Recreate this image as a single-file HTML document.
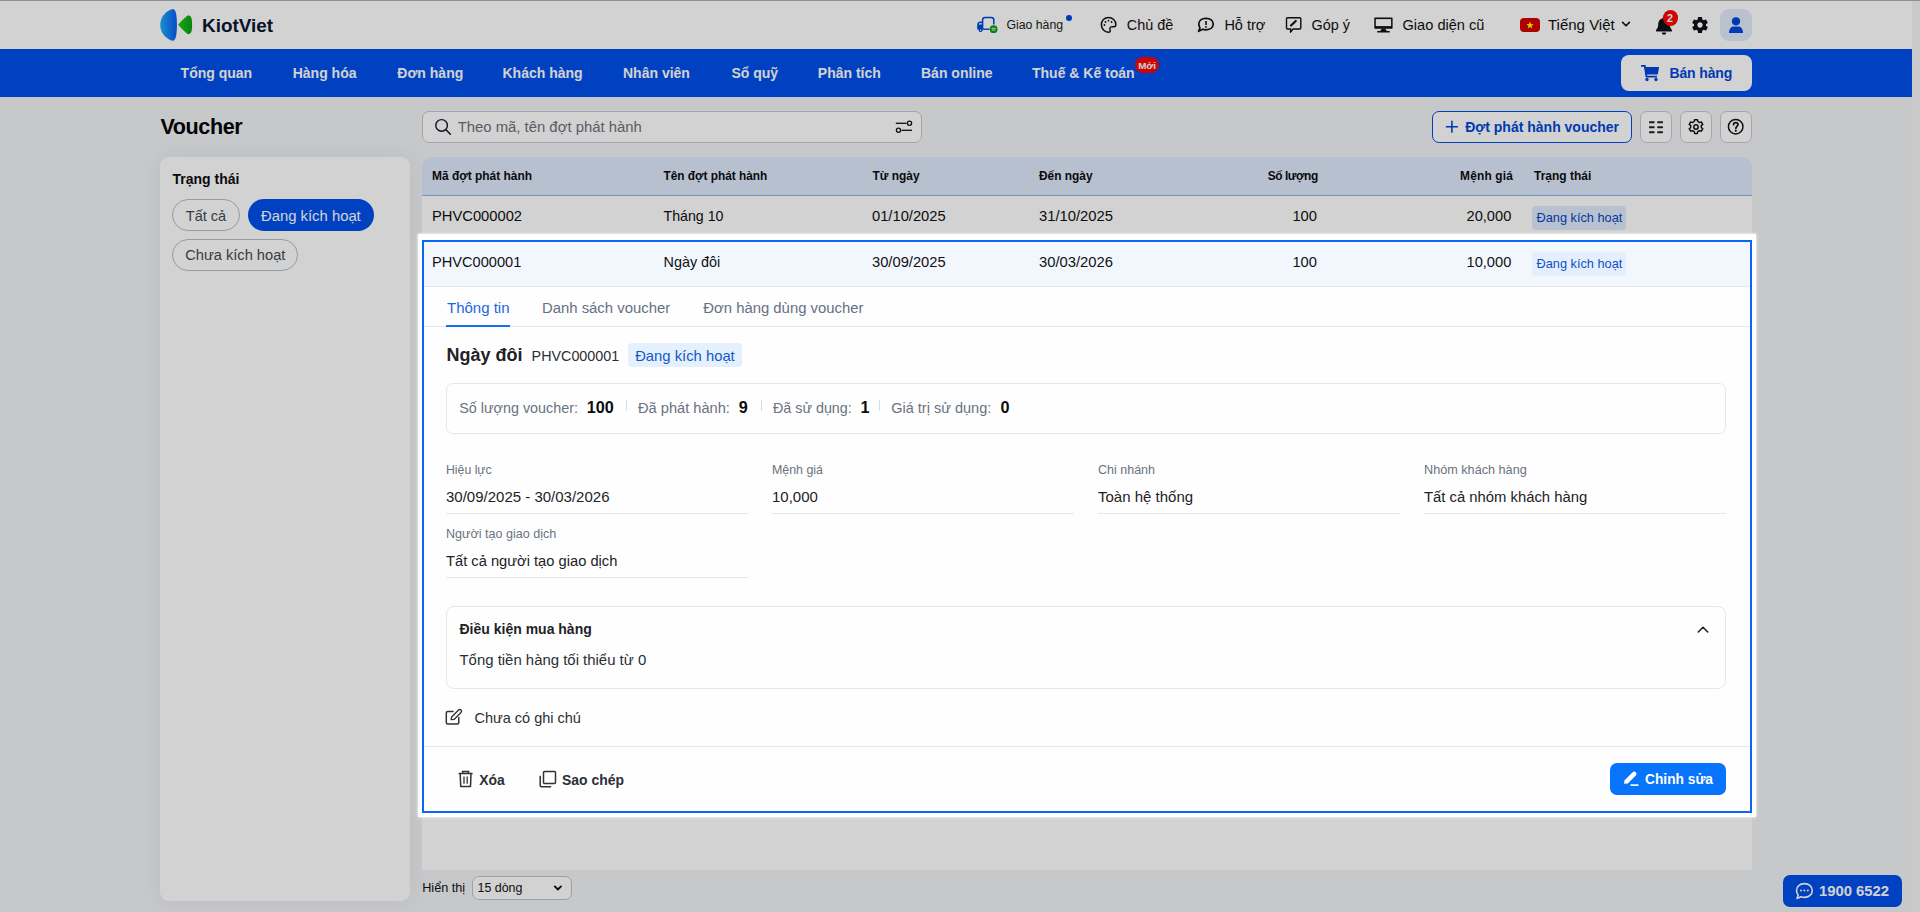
<!DOCTYPE html>
<html lang="vi"><head><meta charset="utf-8"><title>Voucher - KiotViet</title>
<style>
html,body{margin:0;padding:0;}
body{width:1920px;height:912px;overflow:hidden;position:relative;background:#f1f3f6;font-family:"Liberation Sans",sans-serif;}
.t{position:absolute;white-space:nowrap;}
</style></head><body>
<div style="position:absolute;left:0px;top:0px;width:1912px;height:49px;box-sizing:border-box;background:#fff;"></div><svg style="position:absolute;left:158px;top:8px;" width="38" height="34" viewBox="158 8 38 34">
<defs><linearGradient id="lg1" x1="0" y1="0" x2="1" y2="0"><stop offset="0" stop-color="#22b0f6"/><stop offset="1" stop-color="#0a5cf6"/></linearGradient>
<linearGradient id="lg2" x1="0" y1="0" x2="1" y2="0"><stop offset="0" stop-color="#2cc80e"/><stop offset="1" stop-color="#03a414"/></linearGradient></defs>
<path d="M172.7,9.1 C175.6,9.5 176.9,14 176.9,24.9 C176.9,35.8 175.6,40.3 172.7,40.8 C167.2,39.4 160.2,33.6 160.2,24.9 C160.2,16.2 167.2,10.5 172.7,9.1 Z" fill="url(#lg1)"/>
<path d="M178,24.75 C181,21.5 184.5,18 187.5,15.6 C189.8,14.8 191.4,16.5 191.8,19.5 C192.2,22.5 192.2,27 191.8,30 C191.4,33 189.8,34.7 187.5,34 C184.5,31.5 181,28 178,24.75 Z" fill="url(#lg2)"/>
</svg><div class="t " style="left:202.00px;top:17px;font-size:18.9px;line-height:18.9px;color:#0c1633;font-weight:700;letter-spacing:0px;">KiotViet</div><svg style="position:absolute;left:975px;top:15px;" width="24" height="20" viewBox="975 15 24 20">
<path d="M982.6,29.3 V19.8 C982.6,18.2 983.6,17.4 985.2,17.4 H991.2 C992.8,17.4 993.8,18.2 993.8,19.8 V24.6" fill="none" stroke="#0047d9" stroke-width="1.5"/>
<path d="M982.6,29.2 H989.5" fill="none" stroke="#0047d9" stroke-width="1.4"/>
<path d="M977.2,29.6 V24.5 C977.2,22.6 978.6,21.6 980.3,21.6 H982.8 V29.6 Z" fill="#0047d9"/>
<path d="M978.6,24.6 C979,23.4 980,23 981.6,23 V24.6 Z" fill="#fff"/>
<circle cx="980.6" cy="30.2" r="1.9" fill="#0047d9"/><circle cx="980.6" cy="30.2" r="0.7" fill="#fff"/>
<circle cx="993.6" cy="29.2" r="3.9" fill="#079a1a"/>
<rect x="991.4" y="27.8" width="4.4" height="0.9" fill="#fff"/><rect x="991.8" y="29.6" width="3.6" height="0.9" fill="#fff"/>
</svg><div class="t " style="left:1006.40px;top:19px;font-size:12.3px;line-height:12.3px;color:#1a1d22;">Giao hàng</div><div style="position:absolute;left:1066px;top:15px;width:6px;height:6px;box-sizing:border-box;background:#0047d9;border-radius:50%;"></div><svg style="position:absolute;left:1099px;top:15px;" width="20" height="20" viewBox="1099 15 20 20">
<path d="M1108.6,17.5 C1104.3,17.5 1101.4,20.7 1101.4,24.7 C1101.4,29 1104.6,32.2 1108.3,32.2 C1110.3,32.2 1110.4,31.2 1110.1,30.2 C1109.8,29.1 1109.6,27.7 1110.6,27 C1111.5,26.4 1112.8,26.7 1114.2,26.7 C1115.5,26.7 1115.8,25.8 1115.8,24.6 C1115.8,20.6 1112.6,17.5 1108.6,17.5 Z" fill="none" stroke="#111" stroke-width="1.5" stroke-linejoin="round"/>
<circle cx="1105.5" cy="22" r="0.9" fill="#111"/><circle cx="1108.5" cy="20.6" r="0.9" fill="#111"/><circle cx="1111.6" cy="22" r="0.9" fill="#111"/><circle cx="1104.4" cy="25" r="0.9" fill="#111"/>
</svg><div class="t " style="left:1126.80px;top:18px;font-size:14.45px;line-height:14.45px;color:#111;">Chủ đề</div><svg style="position:absolute;left:1196px;top:15px;" width="20" height="20" viewBox="1196 15 20 20">
<path d="M1206,18.4 C1210.3,18.4 1213.2,20.8 1213.2,24.1 C1213.2,27.4 1210.3,29.8 1206,29.8 C1204.8,29.8 1203.7,29.6 1202.8,29.3 L1198.6,31.3 L1200,27.9 C1199.2,26.8 1198.8,25.5 1198.8,24.1 C1198.8,20.8 1201.7,18.4 1206,18.4 Z" fill="none" stroke="#111" stroke-width="1.7" stroke-linejoin="round"/>
<rect x="1205.2" y="21" width="1.6" height="4" fill="#111"/><rect x="1205.2" y="26.1" width="1.6" height="1.6" fill="#111"/>
</svg><div class="t " style="left:1224.40px;top:18px;font-size:14.5px;line-height:14.5px;color:#111;">Hỗ trợ</div><svg style="position:absolute;left:1284px;top:15px;" width="20" height="20" viewBox="1284 15 20 20">
<path d="M1287.5,17.7 H1299.8 C1300.4,17.7 1300.8,18.1 1300.8,18.7 V28 C1300.8,28.6 1300.4,29 1299.8,29 H1293 L1290.6,32.2 V29 H1287.5 C1286.9,29 1286.5,28.6 1286.5,28 V18.7 C1286.5,18.1 1286.9,17.7 1287.5,17.7 Z" fill="none" stroke="#111" stroke-width="1.4" stroke-linejoin="round"/>
<path d="M1291,25.6 L1295.8,20.9" stroke="#111" stroke-width="2.1" stroke-linecap="round"/>
</svg><div class="t " style="left:1311.60px;top:18px;font-size:14.4px;line-height:14.4px;color:#111;">Góp ý</div><svg style="position:absolute;left:1372px;top:15px;" width="22" height="20" viewBox="1372 15 22 20">
<path d="M1375.3,17.6 H1391.6 C1392.3,17.6 1392.6,18 1392.6,18.6 V27.8 C1392.6,28.4 1392.3,28.8 1391.6,28.8 H1375.3 C1374.7,28.8 1374.3,28.4 1374.3,27.8 V18.6 C1374.3,18 1374.7,17.6 1375.3,17.6 Z" fill="#111"/>
<rect x="1375.8" y="19.1" width="15.3" height="7" fill="#fff"/>
<path d="M1381.5,28.8 H1385.5 L1386.6,31 H1389.7 V32.6 H1377.2 V31 H1380.4 Z" fill="#111"/>
</svg><div class="t " style="left:1402.50px;top:18px;font-size:14.6px;line-height:14.6px;color:#111;">Giao diện cũ</div><div style="position:absolute;left:1520px;top:18px;width:20px;height:14px;box-sizing:border-box;background:#d20000;border-radius:4px;"></div><svg style="position:absolute;left:1524px;top:18.6px;" width="12" height="12" viewBox="0 0 24 24"><polygon points="12,5 13.9,10.2 19.4,10.3 15,13.6 16.6,19 12,15.8 7.4,19 9,13.6 4.6,10.3 10.1,10.2" fill="#ffff00"/></svg><div class="t " style="left:1548.00px;top:17px;font-size:15.0px;line-height:15.0px;color:#111;">Tiếng Việt</div><svg style="position:absolute;left:1620px;top:19px;" width="12" height="10" viewBox="1620 19 12 10"><path d="M1622.6,22.4 L1626,25.8 L1629.4,22.4" fill="none" stroke="#111" stroke-width="1.6" stroke-linecap="round" stroke-linejoin="round"/></svg><svg style="position:absolute;left:1652px;top:14px;" width="24" height="24" viewBox="1652 14 24 24">
<path d="M1664,16.6 C1663.3,16.6 1662.8,17.1 1662.8,17.7 V18.3 C1660.1,18.8 1658.2,21.2 1658.2,23.9 V24.8 C1658.2,26.5 1657.6,28.1 1656.5,29.4 L1656.2,29.7 C1655.9,30.1 1655.8,30.6 1656,31 C1656.2,31.4 1656.6,31.6 1657.1,31.6 H1670.9 C1671.4,31.6 1671.8,31.4 1672,31 C1672.2,30.6 1672.1,30.1 1671.8,29.7 L1671.5,29.4 C1670.4,28.1 1669.8,26.5 1669.8,24.8 V23.9 C1669.8,21.2 1667.9,18.8 1665.2,18.3 V17.7 C1665.2,17.1 1664.7,16.6 1664,16.6 Z" fill="#101217"/>
<path d="M1661.8,32.5 H1666.2 C1666.2,33.8 1665.2,34.8 1664,34.8 C1662.8,34.8 1661.8,33.8 1661.8,32.5 Z" fill="#101217"/>
</svg><div style="position:absolute;left:1662.6px;top:10.2px;width:15.6px;height:15.6px;box-sizing:border-box;background:#fa0606;border-radius:50%;"></div><div class="t " style="left:1666.90px;top:13px;font-size:10.8px;line-height:10.8px;color:#fff;font-weight:700;">2</div><svg style="position:absolute;left:1690px;top:15px;" width="20" height="20" viewBox="0 0 24 24"><path fill="#101217" d="M19.14,12.94c0.04-0.3,0.06-0.61,0.06-0.94c0-0.32-0.02-0.64-0.07-0.94l2.03-1.58c0.18-0.14,0.23-0.41,0.12-0.61 l-1.92-3.32c-0.12-0.22-0.37-0.29-0.59-0.22l-2.39,0.96c-0.5-0.38-1.03-0.7-1.62-0.94L14.4,2.81c-0.04-0.24-0.24-0.41-0.48-0.41 h-3.84c-0.24,0-0.43,0.17-0.47,0.41L9.25,5.35C8.66,5.59,8.12,5.92,7.63,6.29L5.24,5.33c-0.22-0.08-0.47,0-0.59,0.22L2.74,8.87 C2.62,9.08,2.66,9.34,2.86,9.48l2.03,1.58C4.84,11.36,4.8,11.69,4.8,12s0.02,0.64,0.07,0.94l-2.03,1.58 c-0.18,0.14-0.23,0.41-0.12,0.61l1.92,3.32c0.12,0.22,0.37,0.29,0.59,0.22l2.39-0.96c0.5,0.38,1.03,0.7,1.62,0.94l0.36,2.54 c0.05,0.24,0.24,0.41,0.48,0.41h3.84c0.24,0,0.44-0.17,0.47-0.41l0.36-2.54c0.59-0.24,1.13-0.56,1.62-0.94l2.39,0.96 c0.22,0.08,0.47,0,0.59-0.22l1.92-3.32c0.12-0.22,0.07-0.47-0.12-0.61L19.14,12.94z M12,15.2c-1.77,0-3.2-1.43-3.2-3.2 s1.43-3.2,3.2-3.2s3.2,1.43,3.2,3.2S13.77,15.2,12,15.2z"/></svg><div style="position:absolute;left:1720px;top:9px;width:32px;height:32px;box-sizing:border-box;background:#e0ebf9;border-radius:9px;"></div><svg style="position:absolute;left:1727px;top:15px;" width="18" height="20" viewBox="1727 15 18 20">
<circle cx="1736" cy="21.3" r="4.1" fill="#0047d9"/>
<path d="M1729,33 C1729,28.3 1731.6,26.4 1733.8,26.4 H1738.2 C1740.4,26.4 1743,28.3 1743,33 Z" fill="#0047d9"/>
</svg><div style="position:absolute;left:0px;top:49px;width:1912px;height:48px;box-sizing:border-box;background:#0050eb;"></div><div class="t " style="left:180.60px;top:66px;font-size:14.0px;line-height:14.0px;color:#fff;font-weight:700;">Tổng quan</div><div class="t " style="left:292.70px;top:66px;font-size:14.0px;line-height:14.0px;color:#fff;font-weight:700;">Hàng hóa</div><div class="t " style="left:397.30px;top:66px;font-size:14.0px;line-height:14.0px;color:#fff;font-weight:700;">Đơn hàng</div><div class="t " style="left:502.50px;top:66px;font-size:14.0px;line-height:14.0px;color:#fff;font-weight:700;">Khách hàng</div><div class="t " style="left:623.00px;top:66px;font-size:14.0px;line-height:14.0px;color:#fff;font-weight:700;">Nhân viên</div><div class="t " style="left:731.40px;top:66px;font-size:14.0px;line-height:14.0px;color:#fff;font-weight:700;">Sổ quỹ</div><div class="t " style="left:817.80px;top:66px;font-size:14.0px;line-height:14.0px;color:#fff;font-weight:700;">Phân tích</div><div class="t " style="left:921.00px;top:66px;font-size:14.0px;line-height:14.0px;color:#fff;font-weight:700;">Bán online</div><div class="t " style="left:1032.00px;top:66px;font-size:14.0px;line-height:14.0px;color:#fff;font-weight:700;">Thuế &amp; Kế toán</div><div style="position:absolute;left:1135px;top:57px;width:24px;height:16px;box-sizing:border-box;background:#fa0606;border-radius:8px;"></div><div class="t " style="left:1138.20px;top:61px;font-size:9.8px;line-height:9.8px;color:#fff;font-weight:700;">Mới</div><div style="position:absolute;left:1621px;top:55px;width:131px;height:36px;box-sizing:border-box;background:#fff;border-radius:8px;"></div><svg style="position:absolute;left:1639px;top:62px;" width="22" height="22" viewBox="1639 62 22 22">
<path d="M1641,64.9 H1645.6 L1646,66.9 H1659.1 L1657.8,74.6 H1647.1 L1647.3,75.8 H1657 V77.5 H1645.7 L1643.9,66.7 H1641 Z" fill="#0047d9"/>
<circle cx="1647" cy="79.5" r="1.7" fill="#0047d9"/><circle cx="1656" cy="79.5" r="1.7" fill="#0047d9"/>
</svg><div class="t " style="left:1669.50px;top:66px;font-size:14.0px;line-height:14.0px;color:#0047d9;font-weight:700;letter-spacing:-0.15px;">Bán hàng</div><div class="t " style="left:160.50px;top:116px;font-size:21.6px;line-height:21.6px;color:#050608;font-weight:700;letter-spacing:-0.45px;">Voucher</div><div style="position:absolute;left:422px;top:111px;width:500px;height:32px;box-sizing:border-box;background:#fff;border:1px solid #c5cad1;border-radius:7px;"></div><svg style="position:absolute;left:433px;top:117px;" width="20" height="20" viewBox="433 117 20 20"><circle cx="441.6" cy="125.4" r="5.8" fill="none" stroke="#101a2a" stroke-width="1.4"/><path d="M445.9,129.7 L450.4,134.2" stroke="#101a2a" stroke-width="1.5" stroke-linecap="round"/></svg><div class="t " style="left:457.70px;top:120px;font-size:14.86px;line-height:14.86px;color:#6b7280;">Theo mã, tên đợt phát hành</div><svg style="position:absolute;left:893px;top:118px;" width="24" height="18" viewBox="893 118 24 18">
<path d="M895.8,123.3 H906.5" stroke="#111" stroke-width="1.3"/><circle cx="909.5" cy="123.3" r="2.1" fill="none" stroke="#111" stroke-width="1.3"/>
<path d="M901.5,130.3 H912" stroke="#111" stroke-width="1.3"/><circle cx="898.5" cy="130.3" r="2.1" fill="none" stroke="#111" stroke-width="1.3"/>
</svg><div style="position:absolute;left:1432px;top:111px;width:200px;height:32px;box-sizing:border-box;background:#fff;border:1.5px solid #0050eb;border-radius:7px;"></div><svg style="position:absolute;left:1443px;top:117px;" width="18" height="20" viewBox="1443 117 18 20"><path d="M1451.9,120.8 V132.8 M1445.9,126.8 H1457.9" stroke="#0047d9" stroke-width="1.6"/></svg><div class="t " style="left:1465.20px;top:120px;font-size:14.0px;line-height:14.0px;color:#0047d9;font-weight:700;">Đợt phát hành voucher</div><div style="position:absolute;left:1640px;top:111px;width:32px;height:32px;box-sizing:border-box;background:#fff;border:1px solid #c5cad1;border-radius:7px;"></div><div style="position:absolute;left:1680px;top:111px;width:32px;height:32px;box-sizing:border-box;background:#fff;border:1px solid #c5cad1;border-radius:7px;"></div><div style="position:absolute;left:1720px;top:111px;width:32px;height:32px;box-sizing:border-box;background:#fff;border:1px solid #c5cad1;border-radius:7px;"></div><svg style="position:absolute;left:1646px;top:117px;" width="20" height="20" viewBox="1646 117 20 20">
<g fill="#222"><rect x="1649" y="121.2" width="5.6" height="2" rx="0.6"/><rect x="1657.2" y="121.2" width="5.8" height="2" rx="0.6"/>
<rect x="1649" y="126.2" width="5.6" height="2" rx="0.6"/><rect x="1657.2" y="126.2" width="5.8" height="2" rx="0.6"/>
<rect x="1649" y="131.2" width="5.6" height="2" rx="0.6"/><rect x="1657.2" y="131.2" width="5.8" height="2" rx="0.6"/></g>
</svg><svg style="position:absolute;left:1686px;top:116.8px;" width="20" height="20" viewBox="0 0 24 24"><path fill="none" stroke="#111" stroke-width="1.75" stroke-linejoin="round" d="M10.3,3.2 h3.4 l0.5,2.4 c0.7,0.25 1.3,0.6 1.9,1.05 l2.3,-0.8 l1.7,2.95 l-1.8,1.6 c0.12,0.7 0.12,1.45 0,2.15 l1.8,1.6 l-1.7,2.95 l-2.3,-0.8 c-0.6,0.45 -1.2,0.8 -1.9,1.05 l-0.5,2.4 h-3.4 l-0.5,-2.4 c-0.7,-0.25 -1.3,-0.6 -1.9,-1.05 l-2.3,0.8 l-1.7,-2.95 l1.8,-1.6 c-0.12,-0.7 -0.12,-1.45 0,-2.15 l-1.8,-1.6 l1.7,-2.95 l2.3,0.8 c0.6,-0.45 1.2,-0.8 1.9,-1.05 z"/><circle cx="12" cy="12" r="2.6" fill="none" stroke="#111" stroke-width="1.75"/></svg><svg style="position:absolute;left:1726.3px;top:117px;" width="19.4" height="19.4" viewBox="0 0 24 24"><circle cx="12" cy="12" r="9" fill="none" stroke="#111" stroke-width="1.8"/><path d="M9.3,9.6 C9.3,8 10.5,6.9 12,6.9 C13.6,6.9 14.8,8 14.8,9.4 C14.8,11.3 12.2,11.7 12.2,13.8" fill="none" stroke="#111" stroke-width="2.1" stroke-linecap="round"/><circle cx="12.1" cy="16.9" r="1.3" fill="#111"/></svg><div style="position:absolute;left:160px;top:157px;width:250px;height:744px;box-sizing:border-box;background:#fff;border-radius:9px;box-shadow:0 0 24px rgba(0,0,0,0.06);"></div><div class="t " style="left:172.50px;top:172px;font-size:14.0px;line-height:14.0px;color:#0b0d10;font-weight:700;">Trạng thái</div><div style="position:absolute;left:172px;top:199px;width:68px;height:32px;box-sizing:border-box;border:1px solid #b9bdc3;border-radius:16px;"></div><div class="t " style="left:185.80px;top:209px;font-size:14.54px;line-height:14.54px;color:#434a54;">Tất cả</div><div style="position:absolute;left:248px;top:199px;width:126px;height:32px;box-sizing:border-box;background:#0050eb;border-radius:16px;"></div><div class="t " style="left:261.00px;top:209px;font-size:14.84px;line-height:14.84px;color:#fff;">Đang kích hoạt</div><div style="position:absolute;left:172px;top:239px;width:126px;height:32px;box-sizing:border-box;border:1px solid #b9bdc3;border-radius:16px;"></div><div class="t " style="left:185.30px;top:248px;font-size:14.64px;line-height:14.64px;color:#434a54;">Chưa kích hoạt</div><div style="position:absolute;left:422px;top:157px;width:1330px;height:713px;box-sizing:border-box;background:#fff;border-radius:9px 9px 0 0;"></div><div style="position:absolute;left:422px;top:157px;width:1330px;height:39px;box-sizing:border-box;background:#dfeafa;border-bottom:1px solid #8fb4ec;border-radius:9px 9px 0 0;"></div><div class="t " style="left:432.00px;top:171px;font-size:11.94px;line-height:11.94px;color:#0b0d10;font-weight:700;">Mã đợt phát hành</div><div class="t " style="left:663.50px;top:171px;font-size:11.85px;line-height:11.85px;color:#0b0d10;font-weight:700;">Tên đợt phát hành</div><div class="t " style="left:872.60px;top:171px;font-size:11.9px;line-height:11.9px;color:#0b0d10;font-weight:700;">Từ ngày</div><div class="t " style="left:1039.00px;top:171px;font-size:11.9px;line-height:11.9px;color:#0b0d10;font-weight:700;">Đến ngày</div><div class="t " style="left:717.80px;width:600px;text-align:right;top:171px;font-size:11.9px;line-height:11.9px;color:#0b0d10;font-weight:700;letter-spacing:-0.42px;">Số lượng</div><div class="t " style="left:913.00px;width:600px;text-align:right;top:171px;font-size:11.9px;line-height:11.9px;color:#0b0d10;font-weight:700;letter-spacing:0.17px;">Mệnh giá</div><div class="t " style="left:1534.00px;top:170px;font-size:11.99px;line-height:11.99px;color:#0b0d10;font-weight:700;">Trạng thái</div><div class="t " style="left:432.00px;top:209px;font-size:14.72px;line-height:14.72px;color:#111;">PHVC000002</div><div class="t " style="left:663.50px;top:209px;font-size:14.2px;line-height:14.2px;color:#111;">Tháng 10</div><div class="t " style="left:872.00px;top:209px;font-size:14.73px;line-height:14.73px;color:#111;">01/10/2025</div><div class="t " style="left:1039.00px;top:209px;font-size:14.79px;line-height:14.79px;color:#111;">31/10/2025</div><div class="t " style="left:717.00px;width:600px;text-align:right;top:209px;font-size:14.72px;line-height:14.72px;color:#111;">100</div><div class="t " style="left:911.30px;width:600px;text-align:right;top:209px;font-size:14.65px;line-height:14.65px;color:#111;">20,000</div><div style="position:absolute;left:1532px;top:206px;width:94px;height:24px;box-sizing:border-box;background:#dfebfd;border-radius:4px;"></div><div class="t " style="left:1536.60px;top:212px;font-size:12.74px;line-height:12.74px;color:#0843bd;">Đang kích hoạt</div><div class="t " style="left:422.20px;top:882px;font-size:12.68px;line-height:12.68px;color:#111;">Hiển thị</div><div style="position:absolute;left:472px;top:876px;width:100px;height:24px;box-sizing:border-box;background:#fff;border:1px solid #bfc4cb;border-radius:7px;"></div><div class="t " style="left:477.50px;top:882px;font-size:12.45px;line-height:12.45px;color:#111;">15 dòng</div><svg style="position:absolute;left:551px;top:883px;" width="14" height="10" viewBox="551 883 14 10"><path d="M554.8,886.4 L557.9,889.5 L561,886.4" fill="none" stroke="#111" stroke-width="1.9" stroke-linecap="round" stroke-linejoin="round"/></svg><div style="position:absolute;left:1783px;top:875px;width:119px;height:32px;box-sizing:border-box;background:#0050eb;border-radius:7px;"></div><svg style="position:absolute;left:1794px;top:881px;" width="20" height="20" viewBox="1794 881 20 20">
<path d="M1804.4,883.6 C1809,883.6 1812.3,886.6 1812.3,890.5 C1812.3,894.4 1809,897.4 1804.4,897.4 C1803.2,897.4 1802,897.2 1801,896.8 L1797,898.5 L1798.2,895 C1797.2,893.8 1796.5,892.2 1796.5,890.5 C1796.5,886.6 1799.8,883.6 1804.4,883.6 Z" fill="none" stroke="#fff" stroke-width="1.6" stroke-linejoin="round"/>
<circle cx="1801" cy="890.6" r="1" fill="#fff"/><circle cx="1804.4" cy="890.6" r="1" fill="#fff"/><circle cx="1807.8" cy="890.6" r="1" fill="#fff"/>
</svg><div class="t " style="left:1818.90px;top:884px;font-size:14.87px;line-height:14.87px;color:#fff;font-weight:700;">1900 6522</div><div style="position:absolute;left:0;top:0;width:1920px;height:912px;background:rgba(0,0,0,0.175);z-index:50;"></div><div style="position:absolute;left:418px;top:234px;width:1338px;height:583px;background:#fff;z-index:55;box-shadow:0 0 3px 0 #fff;"></div><div style="position:absolute;left:422px;top:240px;width:1330px;height:573px;box-sizing:border-box;border:2px solid #0a66f7;background:#fefefe;z-index:60;"></div><div style="position:absolute;left:424px;top:242px;width:1326px;height:45px;box-sizing:border-box;z-index:60;background:#f2f7fe;border-bottom:1px solid #e4e8ee;"></div><div class="t " style="left:432.00px;top:255px;font-size:14.6px;line-height:14.6px;color:#111;z-index:60;">PHVC000001</div><div class="t " style="left:663.50px;top:255px;font-size:14.4px;line-height:14.4px;color:#111;z-index:60;">Ngày đôi</div><div class="t " style="left:872.00px;top:255px;font-size:14.73px;line-height:14.73px;color:#111;z-index:60;">30/09/2025</div><div class="t " style="left:1039.00px;top:255px;font-size:14.79px;line-height:14.79px;color:#111;z-index:60;">30/03/2026</div><div class="t " style="left:717.00px;width:600px;text-align:right;top:255px;font-size:14.72px;line-height:14.72px;color:#111;z-index:60;">100</div><div class="t " style="left:911.30px;width:600px;text-align:right;top:255px;font-size:14.65px;line-height:14.65px;color:#111;z-index:60;">10,000</div><div style="position:absolute;left:1532px;top:252px;width:94px;height:24px;box-sizing:border-box;z-index:60;background:#e3effd;border-radius:4px;"></div><div class="t " style="left:1536.60px;top:258px;font-size:12.74px;line-height:12.74px;color:#0d50c8;z-index:60;">Đang kích hoạt</div><div style="position:absolute;left:424px;top:326px;width:1326px;height:1px;box-sizing:border-box;z-index:60;background:#e4e8ee;"></div><div style="position:absolute;left:446px;top:325px;width:64px;height:2px;box-sizing:border-box;z-index:60;background:#1570ef;"></div><div class="t " style="left:447.00px;top:300px;font-size:15.0px;line-height:15.0px;color:#1a66e0;z-index:60;">Thông tin</div><div class="t " style="left:541.90px;top:301px;font-size:14.9px;line-height:14.9px;color:#667085;z-index:60;">Danh sách voucher</div><div class="t " style="left:703.30px;top:301px;font-size:14.87px;line-height:14.87px;color:#667085;z-index:60;">Đơn hàng dùng voucher</div><div class="t " style="left:446.60px;top:346px;font-size:18.0px;line-height:18.0px;color:#1f2226;font-weight:700;z-index:60;">Ngày đôi</div><div class="t " style="left:531.60px;top:349px;font-size:14.34px;line-height:14.34px;color:#2b2f36;z-index:60;">PHVC000001</div><div style="position:absolute;left:628px;top:343px;width:114px;height:24px;box-sizing:border-box;z-index:60;background:#e5f0fd;border-radius:4px;"></div><div class="t " style="left:635.20px;top:349px;font-size:14.81px;line-height:14.81px;color:#1557c8;z-index:60;">Đang kích hoạt</div><div style="position:absolute;left:446px;top:383px;width:1280px;height:51px;box-sizing:border-box;z-index:60;border:1px solid #e4e7ec;border-radius:7px;"></div><div class="t " style="left:459.25px;top:401px;font-size:14.35px;line-height:14.35px;color:#6b7280;z-index:60;">Số lượng voucher:</div><div class="t " style="left:586.75px;top:399px;font-size:16.2px;line-height:16.2px;color:#0b0d10;font-weight:700;z-index:60;">100</div><div class="t " style="left:638.00px;top:401px;font-size:14.64px;line-height:14.64px;color:#6b7280;z-index:60;">Đã phát hành:</div><div class="t " style="left:738.75px;top:399px;font-size:16.2px;line-height:16.2px;color:#0b0d10;font-weight:700;z-index:60;">9</div><div class="t " style="left:773.00px;top:401px;font-size:14.3px;line-height:14.3px;color:#6b7280;z-index:60;">Đã sử dụng:</div><div class="t " style="left:860.50px;top:399px;font-size:16.2px;line-height:16.2px;color:#0b0d10;font-weight:700;z-index:60;">1</div><div class="t " style="left:891.25px;top:401px;font-size:14.51px;line-height:14.51px;color:#6b7280;z-index:60;">Giá trị sử dụng:</div><div class="t " style="left:1000.50px;top:399px;font-size:16.2px;line-height:16.2px;color:#0b0d10;font-weight:700;z-index:60;">0</div><div style="position:absolute;left:626px;top:400px;width:1px;height:11px;box-sizing:border-box;z-index:60;background:#d9dde3;"></div><div style="position:absolute;left:761px;top:400px;width:1px;height:11px;box-sizing:border-box;z-index:60;background:#d9dde3;"></div><div style="position:absolute;left:879px;top:400px;width:1px;height:11px;box-sizing:border-box;z-index:60;background:#d9dde3;"></div><div class="t " style="left:446.00px;top:464px;font-size:12.28px;line-height:12.28px;color:#6b7280;z-index:60;">Hiệu lực</div><div class="t " style="left:446.00px;top:489px;font-size:15.0px;line-height:15.0px;color:#1f2226;z-index:60;">30/09/2025 - 30/03/2026</div><div style="position:absolute;left:446px;top:513px;width:302px;height:1px;box-sizing:border-box;z-index:60;background:#e4e7ec;"></div><div class="t " style="left:772.00px;top:464px;font-size:12.4px;line-height:12.4px;color:#6b7280;z-index:60;">Mệnh giá</div><div class="t " style="left:772.00px;top:489px;font-size:15.0px;line-height:15.0px;color:#1f2226;z-index:60;">10,000</div><div style="position:absolute;left:772px;top:513px;width:302px;height:1px;box-sizing:border-box;z-index:60;background:#e4e7ec;"></div><div class="t " style="left:1098.00px;top:464px;font-size:12.5px;line-height:12.5px;color:#6b7280;z-index:60;">Chi nhánh</div><div class="t " style="left:1098.00px;top:489px;font-size:15.0px;line-height:15.0px;color:#1f2226;z-index:60;">Toàn hệ thống</div><div style="position:absolute;left:1098px;top:513px;width:302px;height:1px;box-sizing:border-box;z-index:60;background:#e4e7ec;"></div><div class="t " style="left:1424.00px;top:464px;font-size:12.67px;line-height:12.67px;color:#6b7280;z-index:60;">Nhóm khách hàng</div><div class="t " style="left:1424.00px;top:490px;font-size:14.83px;line-height:14.83px;color:#1f2226;z-index:60;">Tất cả nhóm khách hàng</div><div style="position:absolute;left:1424px;top:513px;width:302px;height:1px;box-sizing:border-box;z-index:60;background:#e4e7ec;"></div><div class="t " style="left:446.00px;top:528px;font-size:12.57px;line-height:12.57px;color:#6b7280;z-index:60;">Người tạo giao dịch</div><div class="t " style="left:446.00px;top:554px;font-size:14.7px;line-height:14.7px;color:#1f2226;z-index:60;">Tất cả người tạo giao dịch</div><div style="position:absolute;left:446px;top:577px;width:302px;height:1px;box-sizing:border-box;z-index:60;background:#e4e7ec;"></div><div style="position:absolute;left:446px;top:606px;width:1280px;height:83px;box-sizing:border-box;z-index:60;border:1px solid #e4e7ec;border-radius:8px;"></div><div class="t " style="left:459.50px;top:622px;font-size:14.01px;line-height:14.01px;color:#1f2226;font-weight:700;z-index:60;">Điều kiện mua hàng</div><svg style="position:absolute;left:1695px;top:622px;z-index:60;" width="16" height="14" viewBox="1695 622 16 14"><path d="M1698.3,632 L1703,627.3 L1707.7,632" fill="none" stroke="#222" stroke-width="1.6" stroke-linecap="round" stroke-linejoin="round"/></svg><div class="t " style="left:459.50px;top:653px;font-size:14.93px;line-height:14.93px;color:#2b2f36;z-index:60;">Tổng tiền hàng tối thiểu từ 0</div><svg style="position:absolute;left:443px;top:707px;z-index:60;" width="22" height="20" viewBox="443 707 22 20">
<path d="M453,711.6 H447.8 C446.9,711.6 446.3,712.2 446.3,713.1 V722.6 C446.3,723.5 446.9,724.1 447.8,724.1 H457.3 C458.2,724.1 458.8,723.5 458.8,722.6 V717.4" fill="none" stroke="#333" stroke-width="1.5" stroke-linecap="round"/>
<path d="M451.2,719.6 L451.6,717 L458.6,710 C459.3,709.3 460.3,709.3 461,710 C461.7,710.7 461.7,711.7 461,712.4 L454,719.4 Z" fill="none" stroke="#333" stroke-width="1.4" stroke-linejoin="round"/>
</svg><div class="t " style="left:474.50px;top:711px;font-size:14.51px;line-height:14.51px;color:#2b2f36;z-index:60;">Chưa có ghi chú</div><div style="position:absolute;left:424px;top:746px;width:1326px;height:1px;box-sizing:border-box;z-index:60;background:#e4e7ec;"></div><svg style="position:absolute;left:456px;top:769px;z-index:60;" width="20" height="20" viewBox="456 769 20 20">
<path d="M458.6,773.6 H472.6 M462.6,773.6 V771.6 H468.6 V773.6" fill="none" stroke="#333" stroke-width="1.5"/>
<path d="M460.2,773.8 L460.7,786.4 H470.5 L471,773.8" fill="none" stroke="#333" stroke-width="1.5" stroke-linejoin="round"/>
<path d="M464,776.6 V783.8 M467.2,776.6 V783.8" stroke="#333" stroke-width="1.3"/>
</svg><div class="t " style="left:479.20px;top:774px;font-size:13.9px;line-height:13.9px;color:#2b2f36;font-weight:700;z-index:60;">Xóa</div><svg style="position:absolute;left:537px;top:768px;z-index:60;" width="22" height="22" viewBox="537 768 22 22">
<rect x="543.5" y="771.5" width="12" height="12" rx="1" fill="none" stroke="#333" stroke-width="1.5"/>
<path d="M540.2,775.8 V785.6 C540.2,786.3 540.7,786.8 541.4,786.8 H551.2" fill="none" stroke="#333" stroke-width="1.5"/>
</svg><div class="t " style="left:562.00px;top:774px;font-size:13.95px;line-height:13.95px;color:#2b2f36;font-weight:700;z-index:60;">Sao chép</div><div style="position:absolute;left:1610px;top:763px;width:116px;height:32px;box-sizing:border-box;z-index:60;background:#0874fb;border-radius:7px;"></div><svg style="position:absolute;left:1621px;top:770px;z-index:60;" width="20" height="18" viewBox="1621 770 20 18">
<path d="M1624,783.8 L1624.6,780.2 L1632.6,772.2 C1633.5,771.3 1634.9,771.3 1635.8,772.2 C1636.7,773.1 1636.7,774.5 1635.8,775.4 L1627.8,783.4 Z" fill="#fff"/>
<rect x="1630.5" y="784.3" width="8" height="1.6" fill="#fff"/>
</svg><div class="t " style="left:1645.00px;top:773px;font-size:13.75px;line-height:13.75px;color:#fff;font-weight:700;z-index:60;">Chỉnh sửa</div><div style="position:absolute;left:0;top:0;width:1920px;height:1px;background:#8e8e8e;z-index:100;"></div><div style="position:absolute;left:1912px;top:1px;width:8px;height:911px;background:#cacaca;z-index:100;"></div>
</body></html>
